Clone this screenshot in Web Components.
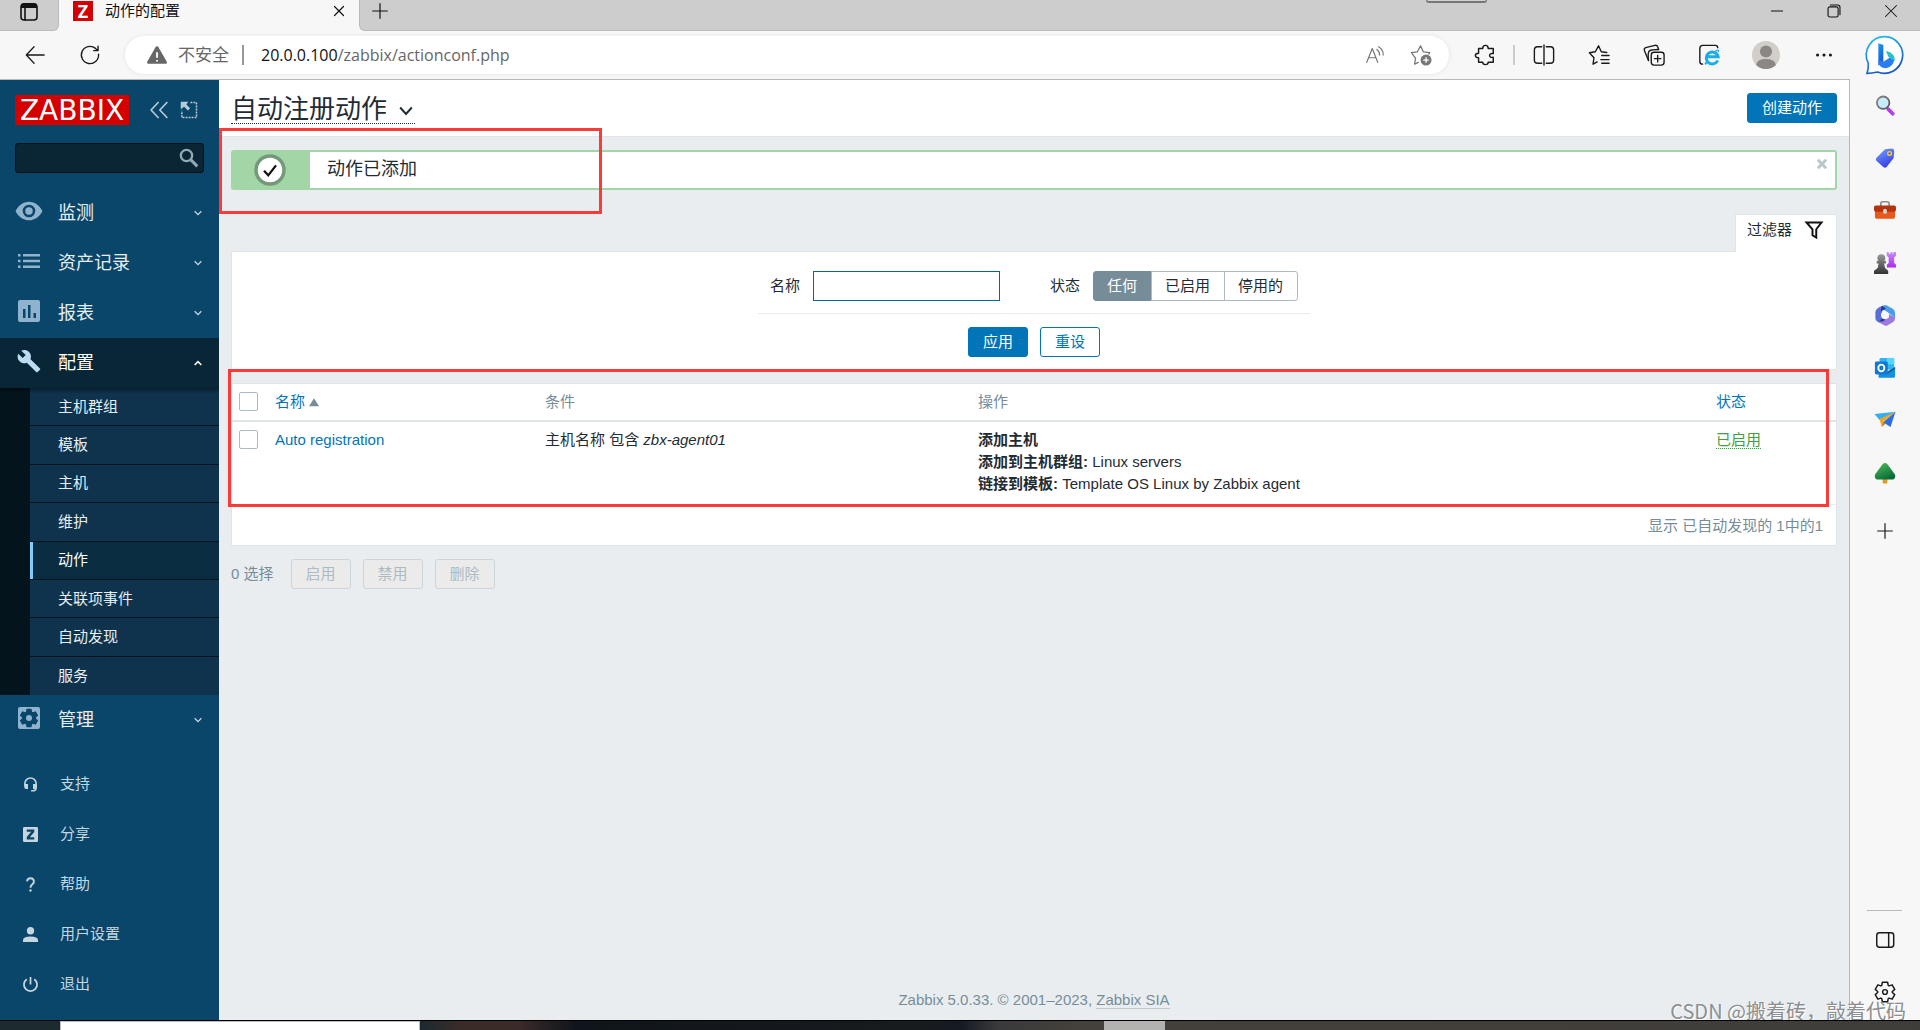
<!DOCTYPE html>
<html lang="zh-CN">
<head>
<meta charset="utf-8">
<title>动作的配置</title>
<style>
  body { margin: 0; font: 15px/22px "Liberation Sans", "Noto Sans CJK SC", sans-serif; color: #1f2c33; }
</style>
</head>
<body>
<app-window></app-window>
<script>
const base = `*{box-sizing:border-box} a{color:inherit;text-decoration:none} button,input{font:inherit;color:inherit;margin:0} button{border:0;background:none;padding:0;cursor:pointer}`;
function define(name, css, html) {
  const t = document.createElement('template');
  t.innerHTML = `<style>${base}${css}</style>${html}`;
  customElements.define(name, class extends HTMLElement {
    constructor() { super(); this.attachShadow({ mode: 'open' }).append(t.content.cloneNode(true)); }
  });
}

const gear = (r1, r2) => {
  let d = '';
  for (let i = 0; i < 6; i++) {
    const a = i * 60 - 90;
    [[-26, r2], [-15, r1], [15, r1], [26, r2]].forEach(([o, r], j) => {
      const k = (a + o) * Math.PI / 180;
      d += `${i || j ? 'L' : 'M'}${(12 + r * Math.cos(k)).toFixed(2)} ${(12 + r * Math.sin(k)).toFixed(2)}`;
    });
  }
  return d + 'Z';
};
const S = 'fill="none" stroke="currentColor" stroke-linecap="round" stroke-linejoin="round"';
const F = 'fill="currentColor"';
const icons = {
  tabs: `<g ${S} stroke-width="1.6"><rect x="4" y="4" width="16" height="16" rx="3"/><path d="M8 8v12"/></g><path ${F} d="M4 8V6q0-3 3-3h10q3 0 3 3v2z"/>`,
  close: `<path ${S} stroke-width="1.2" d="M7.500 7.500l9 9M16.500 7.500l-9 9"/>`,
  winclose: `<path ${S} stroke-width="1.100" d="M6 6l12 12M18 6L6 18"/>`,
  plus: `<path ${S} stroke-width="1.3" d="M12 4v16M4 12h16"/>`,
  min: `<path ${S} stroke-width="1.2" d="M6 12h12"/>`,
  restore: `<g ${S} stroke-width="1.2"><rect x="5.500" y="7.500" width="11" height="11" rx="2"/><path d="M8 5.500h8q2.500 0 2.500 2.500v8"/></g>`,
  back: `<path ${S} stroke-width="1.4" d="M22 12H2.500M11 3L2.500 12l8.500 9"/>`,
  reload: `<path ${S} stroke-width="1.5" d="M21.300 11A9.400 9.400 0 1 1 18 4.800l2.500 2.200M20.800 2.500V7.200H16"/>`,
  warn: `<path fill="#666" d="M12 2.500q1 0 1.600 1L22.500 19q1 2.500-1.500 2.500H3Q.5 21.500 1.500 19L10.400 3.500q.6-1 1.600-1z"/><path d="M12 9v6M12 17.500v1.500" stroke="#fff" stroke-width="2"/>`,
  read: `<g ${S} stroke="#777" stroke-width="1.300"><path d="M3 20L9 5l6 15M5 15h8M14 6q3 2 3 6M16 3q5 3 5 9"/></g>`,
  addfav: `<path ${S} stroke-width="1.400" d="M9 20l-4 2 1-6.500L1.500 9.500l6.500-1L11.500 2l3 6.500 7 1-1 1.500"/><circle cx="17.500" cy="17.500" r="6" ${F}/><path d="M17.500 14.500v6M14.500 17.500h6" stroke="#fff" stroke-width="1.400"/>`,
  ext: `<path ${S} stroke-width="1.600" d="M5 5h4.500q0-3.500 3-3.500t3 3.500H21v5.500q-4-.5-4 2t4 2V20h-5.500q0 2.500-3 2.500t-3-2.500H5v-5Q1.500 15 1.500 12.500T5 10z"/>`,
  split: `<path ${S} stroke-width="1.500" d="M9.500 3H5Q1.500 3 1.500 6.500v11Q1.500 21 5 21h4.500M14.500 3H19q3.500 0 3.500 3.500v11Q22.500 21 19 21h-4.500M12 1v22"/>`,
  fav: `<path ${S} stroke-width="1.500" d="M10 19.500l-4.500 2.500 1-7L1.500 9.500l6.500-1L11.500 2l3 6.500 6 .8M15 12.500h8M14 17h9M15 21h8"/>`,
  collect: `<g ${S} stroke-width="1.500"><rect x="9" y="9" width="14" height="14" rx="3"/><path d="M16 12.500v7M12.500 16h7M6 18L1.500 7Q1 4.500 3 4l10-2.500q2.500-.4 3 1.500L17 6"/><path d="M6 18Q5 9 7 7.500T17 6"/></g>`,
  ie: `<path ${S} stroke-width="1.500" d="M5 22Q2 22 2 19V5q0-3.500 3-3.500h14q2.500 0 2.500 2.500"/><path fill="none" stroke="#1aaee8" stroke-width="3.200" d="M21.500 18a6.500 6.500 0 1 1 .5-4H10"/><path fill="none" stroke="#1aaee8" stroke-width="1.500" d="M10 20q-3 3.500-1.500 0M19 8q4-3 3 1"/>`,
  avatar: `<circle cx="12" cy="12" r="12" fill="#d2cfca"/><circle cx="12" cy="9" r="5.200" fill="#8b8784"/><path fill="#8b8784" d="M3.500 20.500q1-5 8.500-5t8.500 5Q17 24 12 24T3.500 20.500z"/>`,
  dots: `<g ${F}><circle cx="5" cy="12" r="1.700"/><circle cx="12" cy="12" r="1.700"/><circle cx="19" cy="12" r="1.700"/></g>`,
  bing: `<defs><linearGradient id="a" x2=".4" y2="1"><stop stop-color="#20c5ee"/><stop offset="1" stop-color="#1857c9"/></linearGradient><linearGradient id="b" x2=".3" y2="1"><stop stop-color="#1a9bf0"/><stop offset="1" stop-color="#1657d8"/></linearGradient></defs><path fill="#fff" stroke="url(#a)" stroke-width="1" d="M12 1a11 11 0 1 1-4.500 21.200Q4 23 1.200 23q.9-2.500.8-6A11 11 0 0 1 12 1z"/><path fill="url(#b)" d="M8 5l3 1v10l-3 2.500z"/><path fill="#2a7df0" d="M8 15l3 1 4-2.500 2.500 1.500Q17 19 12.500 20 8 20 8 15z"/><path fill="#25c2c9" d="M12.500 9.500q5.500 1.500 5.500 6l-3-1.500-1-1z"/>`,
  lens: `<defs><linearGradient id="a" x2="1" y2="1"><stop stop-color="#8a8a8a"/><stop offset="1" stop-color="#555"/></linearGradient></defs><path d="M15.500 16.500l5 5" stroke="#b63af0" stroke-width="4" stroke-linecap="round"/><circle cx="10" cy="9.500" r="6.800" fill="#c6ebfb" stroke="url(#a)" stroke-width="2"/>`,
  tag: `<defs><linearGradient id="a" x2=".5" y2="1"><stop stop-color="#6fa8ff"/><stop offset="1" stop-color="#3d3de8"/></linearGradient></defs><path fill="url(#a)" d="M12 2.500L19 1.500q3 0 3 3l-.5 7.500-8 10q-1.500 1-3 0L2.500 15q-1-1.500 0-3z"/><circle cx="17" cy="7" r="2" fill="#4a5ad8" stroke="#ffd028" stroke-width="1.500"/>`,
  brief: `<path fill="none" stroke="#8d8a88" stroke-width="1.800" d="M7.500 8V5q0-2 2-2h5q2 0 2 2v3"/><rect x="1" y="11" width="22" height="10.500" rx="2" fill="#e65a1e"/><rect x="0" y="7" width="24" height="7" rx="2" fill="#b53410"/><rect x="10" y="11" width="4" height="5" rx="1.500" fill="#d5d2d0"/>`,
  chess: `<defs><linearGradient id="a" x2="0" y2="1"><stop stop-color="#999"/><stop offset="1" stop-color="#333"/></linearGradient><linearGradient id="b" x2="0" y2="1"><stop stop-color="#c88cff"/><stop offset="1" stop-color="#a92bf0"/></linearGradient></defs><path fill="url(#b)" d="M14 0h2v2h2V0h2v2h1V0h3v4L22 6v6l2 2v3H14v-3l2-2V6l-2-2z"/><path fill="url(#a)" d="M8 2.500a4 4 0 0 1 3 7h2v3h-2l1 5 3.500 3V24H0v-3.500l4-3 1-5H3v-3h2a4 4 0 0 1 3-7z"/>`,
  m365: `<path fill="#4a9cf0" d="M9 2l4-1 7.500 4.300Q23 7 23 10v5l-6-4.500L12 7l-5-1z"/><path fill="#5a6fd6" d="M9 2Q1.500 5 1.500 9v6Q1.500 18.500 5 20l4-3-1.500-5.500L9 8z"/><path fill="#9b7be0" d="M5 20l6.500 3.500q1.500.5 3 0L21 19.500q2.500-2 2-5L16 11v4l-6 2.500z"/><path fill="#283b8e" d="M9 2q-2 2-1 9V8l5-3zM5 20l6-1.500 1-2-3-1z"/><circle cx="12.200" cy="12.200" r="4" fill="#f7f7f7"/>`,
  outlook: `<rect x="6" y="1" width="16" height="13" rx="1.500" fill="#32b4f0"/><rect x="14" y="1" width="8" height="7" fill="#50d9ff"/><path fill="#1490df" d="M5 22.500V13l9 4 9-6v10q0 1.500-1.500 1.500z"/><path fill="#0a5ba8" d="M13 17l10-6v2l-8 5 8 4.500z"/><rect x="1" y="5" width="14" height="14" rx="1.500" fill="#0f78d4"/><ellipse cx="8" cy="12" rx="3.300" ry="3.600" fill="none" stroke="#fff" stroke-width="2"/>`,
  plane: `<path fill="#35aef2" d="M.5 5.500L23.500 3 6 12z"/><path fill="#f2a516" d="M6 11l17.500-8L10 14l-1.500 5.500z"/><path fill="#2c6be0" d="M23.500 3L18 19.500 10 14.500z"/><path fill="#c77a08" d="M8.500 19.500L10 14l2.500 2z"/>`,
  tree: `<defs><linearGradient id="a" x2=".6" y2="1"><stop stop-color="#4fc35a"/><stop offset="1" stop-color="#0b6b3a"/></linearGradient></defs><rect x="9.500" y="17" width="5" height="6.500" rx="1" fill="#e8971e"/><path fill="url(#a)" d="M12 1q2 0 3.500 2.500L22.500 13q2 4-1.500 6H3Q-.5 17 1.500 13l7-9.500Q10 1 12 1z"/>`,
  panel: `<g ${S} stroke-width="1.600"><rect x="3" y="4" width="18.500" height="16" rx="3"/><path d="M16 4v16"/></g>`,
  setting: `<path ${S} stroke-width="1.600" d="${gear(11, 8)}"/><circle cx="12" cy="12" r="2.600" ${S} stroke-width="1.600"/>`,
  collapse: `<path ${S} stroke-linecap="butt" stroke-width="2" d="M11 3L2.500 12l8.500 9M21.500 3L13 12l8.500 9"/>`,
  kiosk: `<path ${F} d="M1 1h10L8.500 4.500l5 5-3 3-5-5L1 11z"/><path fill="none" stroke="currentColor" stroke-width="2" stroke-dasharray="2.500 1.500" d="M14 2h8v20H2.500V13"/>`,
  search: `<g fill="none" stroke="currentColor"><circle cx="9" cy="9" r="6.800" stroke-width="2.800"/><path stroke-width="3.600" d="M14 14l8 8"/></g>`,
  eye: `<path ${F} fill-rule="evenodd" d="M12 4c5 0 9.500 3.500 11.500 8-2 4.500-6.500 8-11.500 8S2.500 16.500.5 12C2.500 7.500 7 4 12 4zm0 2.600a5.400 5.400 0 1 0 0 10.800 5.400 5.400 0 0 0 0-10.800zm0 2.200a3.200 3.200 0 1 1 0 6.400 3.200 3.200 0 0 1 0-6.400z"/>`,
  list: `<g ${F}><path d="M1 5h2.500v2.500H1zM1 10.700h2.500v2.500H1zM1 16.500h2.500V19H1zM6 5h17v2.500H6zM6 10.700h17v2.500H6zM6 16.500h17V19H6z"/></g>`,
  chart: `<path ${F} fill-rule="evenodd" d="M3 1h18q2 0 2 2v18q0 2-2 2H3q-2 0-2-2V3q0-2 2-2zm3 9v9h2.500v-9zm5-4v13h2.500V6zm5.500 8v5H19v-5z"/>`,
  wrench: `<path ${F} d="M23 19.500l-9.500-9.300c1-2.500.4-5.300-1.500-7.200C9.900 1 6.800.6 4.300 1.700L8.700 6 5.700 9 1.200 4.700C0 7.200.5 10.300 2.600 12.300c2 2 4.800 2.500 7.200 1.500l9.400 9.300q.7.600 1.400 0l2.400-2.300q.6-.7 0-1.300z"/>`,
  admin: `<path ${F} fill-rule="evenodd" d="M3 1h18q2 0 2 2v18q0 2-2 2H3q-2 0-2-2V3q0-2 2-2z ${gear(9.500, 7)} M12 9a3 3 0 1 0 0 6 3 3 0 0 0 0-6z"/>`,
  support: `<path fill="none" stroke="currentColor" stroke-width="2.600" d="M3 14v-3.500a9 9 0 0 1 18 0V17q0 5-6 5h-2"/><path ${F} d="M2 11h6v8H5q-3 0-3-3zM16 11h6v5q0 3-3 3h-3z"/>`,
  share: `<path ${F} fill-rule="evenodd" d="M2 0h20q2 0 2 2v20q0 2-2 2H2q-2 0-2-2V2q0-2 2-2zm4 4v3.500h7L6 16v4h12v-3.500h-7L18 8V4z"/>`,
  help: `<path fill="none" stroke="currentColor" stroke-width="3" d="M6.500 7Q7 2 12 2T17.500 7Q17.500 9.500 15 11.500 12 13.500 12 17"/><circle cx="12" cy="21.500" r="1.900" ${F}/>`,
  user: `<g ${F}><ellipse cx="12" cy="6" rx="5.800" ry="6"/><path d="M0 24v-3q0-6 12-6t12 6v3z"/></g>`,
  power: `<path fill="none" stroke="currentColor" stroke-width="2.800" d="M12 0v12M6 3.500a10.500 10.500 0 1 0 12 0"/>`,
  down: `<path fill="none" stroke="currentColor" stroke-width="4" d="M2 7l10 10L22 7"/>`,
  up: `<path fill="none" stroke="currentColor" stroke-width="4.500" d="M2 18L12 8l10 10"/>`,
  chev: `<path fill="none" stroke="currentColor" stroke-width="3.400" d="M2 6l10 11L22 6"/>`,
  check: `<circle cx="12" cy="12" r="10.500" fill="#fff" stroke="#75987a" stroke-width="2.600"/><path fill="none" stroke="#111" stroke-width="1.700" d="M7.500 12.500l3.200 3.500L16.500 8.500"/>`,
  cross: `<path stroke="currentColor" stroke-width="7" d="M2 2l20 20M22 2L2 22"/>`,
  funnel: `<path fill="none" stroke="currentColor" stroke-width="2.600" d="M2 2h20l-7 9v11l-5-3v-8z"/>`,
  sort: `<path ${F} d="M12 3l12 19H0z"/>`
};
customElements.define('ui-icon', class extends HTMLElement {
  constructor() { super(); this.attachShadow({ mode: 'open' }); }
  connectedCallback() {
    const s = this.getAttribute('size') || 24;
    this.shadowRoot.innerHTML = `<style>:host{display:inline-flex;flex:none;width:${s}px;height:${s}px}svg{width:100%;height:100%;overflow:visible}</style><svg viewBox="0 0 24 24" aria-hidden="true">${icons[this.getAttribute('name')]}</svg>`;
  }
});

define('edge-tabstrip', `
  :host{display:flex;height:31px;background:#f7f7f7;color:#111}
  .menu{width:59px;background:#cdcdcd;border-right:1px solid #bbb;border-bottom:1px solid #bbb;border-radius:0 0 6px 0;display:flex;justify-content:center;align-items:flex-start}
  .tab{width:300px;padding:0 8px 0 14px;display:flex;align-items:center;height:22px;gap:12px}
  .fav{width:20px;height:20px;background:#d40000;color:#fff;font:bold 18px/20px "Open Sans",sans-serif;text-align:center}
  .tab span{flex:1}
  button{display:flex}
  .rest{flex:1;background:#cdcdcd;border-left:1px solid #bbb;border-bottom:1px solid #bbb;border-radius:0 0 0 6px;display:flex;padding-left:9px;padding-right:1px;align-items:flex-start}
  .grip{width:61px;height:3px;margin-left:auto;margin-right:261px;background:#cfd4cf;border:1px solid #777;border-bottom-width:2px;border-top:0;border-radius:0 0 4px 4px}
  .win{width:57px;justify-content:center}`,
 `<button class="menu" aria-label="标签页操作"><ui-icon name="tabs" size="24"></ui-icon></button>
  <div class="tab"><div class="fav">Z</div><span>动作的配置</span><button aria-label="关闭标签页"><ui-icon name="close" size="24"></ui-icon></button></div>
  <div class="rest"><button aria-label="新建标签页"><ui-icon name="plus" size="22"></ui-icon></button><div class="grip"></div>
  <button class="win" aria-label="最小化"><ui-icon name="min" size="22"></ui-icon></button><button class="win" aria-label="还原"><ui-icon name="restore" size="22"></ui-icon></button><button class="win" aria-label="关闭"><ui-icon name="winclose" size="22"></ui-icon></button></div>`);

define('edge-toolbar', `
  :host{display:flex;align-items:center;height:48px;padding:0 5px 0 24px;background:#f7f7f7;color:#1a1a1a}
  button{display:flex;align-items:center;justify-content:center;width:55px}
  .nav{width:22px;margin-right:33px}
  .pill{flex:1;height:38px;border-radius:19px;background:#fff;box-shadow:0 0 4px #e4e4e4;display:flex;align-items:center;padding:0 16px 0 21px;margin:0 8px 0 -9px;color:#666;font:17px/24px "Open Sans","Noto Sans CJK SC",sans-serif}
  .pill span{margin:0 13px 0 10px}
  .pill i{width:2px;height:20px;background:#999;margin-right:17px}
  .url{flex:1;font-size:16px}.url b{font-weight:400;color:#111}
  .pill button{width:46px;color:#777}
  .pill button:last-child{width:24px;margin-left:11px}
  .sep{width:2px;height:20px;background:#ccc;margin:0 1px}
  .av{width:60px} .chat{width:64px;justify-content:flex-end;padding-right:10px}`,
 `<button class="nav" aria-label="返回"><ui-icon name="back" size="22"></ui-icon></button><button class="nav" aria-label="刷新"><ui-icon name="reload" size="22"></ui-icon></button>
  <div class="pill"><ui-icon name="warn" size="22"></ui-icon><span>不安全</span><i></i><div class="url"><b>20.0.0.100</b>/zabbix/actionconf.php</div>
  <button aria-label="大声朗读"><ui-icon name="read" size="22"></ui-icon></button><button aria-label="添加到收藏夹"><ui-icon name="addfav" size="22"></ui-icon></button></div>
  <button aria-label="扩展"><ui-icon name="ext" size="22"></ui-icon></button><div class="sep"></div>
  <button aria-label="分屏"><ui-icon name="split" size="22"></ui-icon></button><button aria-label="收藏夹"><ui-icon name="fav" size="22"></ui-icon></button>
  <button aria-label="集锦"><ui-icon name="collect" size="22"></ui-icon></button><button aria-label="IE 模式"><ui-icon name="ie" size="22"></ui-icon></button>
  <button class="av" aria-label="个人资料"><ui-icon name="avatar" size="28"></ui-icon></button><button aria-label="更多"><ui-icon name="dots" size="22"></ui-icon></button>
  <button class="chat" aria-label="必应"><ui-icon name="bing" size="40"></ui-icon></button>`);

define('edge-sidebar', `
  :host{display:flex;flex-direction:column;width:71px;background:#f7f7f7;border-left:1px solid #b8b8b8;align-items:center;color:#1a1a1a;padding:0 1px 2px 0}
  .apps{display:grid;grid-template-rows:repeat(8,1fr);height:420px}
  button{display:flex;align-items:center;justify-content:center;width:53px;height:52px}
  .plus{margin-top:6px}
  hr{width:35px;border:0;border-top:1px solid #b8b8b8;margin:auto 0 3px}`,
 `<div class="apps">${[['lens','搜索'],['tag','购物'],['brief','工具'],['chess','游戏'],['m365','Microsoft 365'],['outlook','Outlook'],['plane','Drop'],['tree','树']].map(([n,l]) => `<button aria-label="${l}"><ui-icon name="${n}" size="22"></ui-icon></button>`).join('')}</div>
  <button class="plus" aria-label="自定义"><ui-icon name="plus" size="22"></ui-icon></button><hr>
  <button aria-label="隐藏边栏"><ui-icon name="panel" size="22"></ui-icon></button><button aria-label="设置"><ui-icon name="setting" size="22"></ui-icon></button>`);

define('zbx-menu-item', `
  :host{display:flex;align-items:center;height:50px;padding:0 17px 0 15px;color:#e6eef3;font-size:18px}
  a{display:flex;flex:1;align-items:center}
  .i{display:flex;width:28px;height:31px;justify-content:center}
  .t{flex:1;margin-left:15px}
  :host([open]){background:#092637;color:#fff}`, `<a href="#"><span class="i"><slot name="icon"></slot></span><span class="t"><slot></slot></span><slot name="chev"></slot></a>`);
define('zbx-sub-item', `
  :host{display:flex;border-bottom:1px solid #04141d;background:#0f334d;color:#e6eef3}
  :host(:last-child){border-bottom:0}
  a{display:flex;flex:1;align-items:center;padding-left:28px}
  :host([selected]){background:#0a2d41;color:#fff}
  :host([selected]) a{border-left:3px solid #80ccff;padding-left:25px}`, `<a href="#"><slot></slot></a>`);
define('zbx-foot-item', `
  :host{display:flex;height:50px;padding:0 23px;color:#c6d6e0}
  a{display:flex;flex:1;align-items:center}
  span{margin-left:22px}`, `<a href="#"><slot name="icon"></slot><span><slot></slot></span></a>`);

const item = (icon, text, open) => `<zbx-menu-item ${open ? 'open' : ''}><ui-icon class="mi" slot="icon" name="${icon}" size="${icon === 'eye' ? 28 : 24}"></ui-icon>${text}<ui-icon slot="chev" name="${open ? 'up' : 'down'}" size="8"></ui-icon></zbx-menu-item>`;
define('zbx-sidebar', `
  :host{display:block;width:219px;background:#0a466a}
  .top{display:flex;align-items:center;height:30px;margin:15px 15px 18px;color:#b5cbd8}
  .logo{flex:none;width:114px;height:30px;background:#d40000;color:#fff;font:28px/31px "DejaVu Sans",sans-serif;text-align:center;margin-right:20px}
  .top button{display:flex;margin-right:11px}
  .top button:last-child{margin:0}
  .search{display:flex;align-items:center;height:30px;margin:0 15px 15px;border:1px solid #041018;border-radius:3px;background:#0a2635;color:#8fa9ba;padding-right:4px}
  .search input{flex:1;min-width:0;background:none;border:0;outline:0;padding:0 8px;height:28px}
  .search button{display:flex}
  .mi{color:#8fb3cd} zbx-menu-item ui-icon[slot=chev]{color:#c5d5df}
  .mi{margin-top:1px} .mi[name=eye]{margin-top:-1px}
  zbx-menu-item[open] .mi{color:#bcdcf2} zbx-menu-item[open] ui-icon[slot=chev]{color:#fff}
  .sub{display:grid;grid-template-rows:repeat(8,1fr);height:307px;padding-left:30px;background:#04141d;position:relative}
  .sub::before{content:"";position:absolute;inset:0 0 auto;height:6px;background:linear-gradient(#0006,#0000);z-index:1}
  .foot{margin-top:14px}`,
 `<div class="top"><div class="logo">ZABBIX</div><button aria-label="折叠"><ui-icon name="collapse" size="20"></ui-icon></button><button aria-label="隐藏"><ui-icon name="kiosk" size="18"></ui-icon></button></div>
  <div class="search"><input aria-label="搜索"><button aria-label="搜索"><ui-icon name="search" size="20"></ui-icon></button></div>
  <nav>${item('eye','监测')}${item('list','资产记录')}${item('chart','报表')}${item('wrench','配置',1)}
  <div class="sub">${['主机群组','模板','主机','维护','动作','关联项事件','自动发现','服务'].map(t => `<zbx-sub-item ${t === '动作' ? 'selected' : ''}>${t}</zbx-sub-item>`).join('')}</div>
  ${item('admin','管理')}</nav>
  <div class="foot">${[['support','支持'],['share','分享'],['help','帮助'],['user','用户设置'],['power','退出']].map(([i,t]) => `<zbx-foot-item><ui-icon slot="icon" name="${i}" size="15"></ui-icon>${t}</zbx-foot-item>`).join('')}</div>`);

define('zbx-button', `
  :host{display:inline-flex}
  button{height:30px;padding:0 14px;line-height:28px;border:1px solid #0275b8;border-radius:3px;background:#0275b8;color:#fff}
  :host([alt]) button{background:#fff;color:#0275b8}
  button:disabled{background:#ebebeb;color:#acbbc2;border-color:#ccd5d9}`, `<button><slot></slot></button>`);
customElements.define('zbx-disabled-button', class extends customElements.get('zbx-button') {
  constructor() { super(); this.shadowRoot.querySelector('button').disabled = true; }
});

define('zbx-message', `
  :host{display:flex;height:40px;border:2px solid #a3d6a6;border-radius:3px;background:#fff;font-size:18px}
  .i{width:77px;background:#a3d6a6;display:flex;align-items:center;justify-content:center;padding-right:3px}
  p{flex:1;margin:0;padding:0 17px;line-height:34px}
  button{display:flex;color:#b8c6cd;margin:7px 8px 0 0;height:10px}`,
 `<div class="i"><ui-icon name="check" size="32"></ui-icon></div><p><slot></slot></p><button aria-label="关闭"><ui-icon name="cross" size="10"></ui-icon></button>`);

define('zbx-filter', `
  :host{display:block}
  .tab{display:flex;align-items:center;gap:13px;width:102px;height:38px;margin:0 0 -1px auto;padding:0 12px 7px 11px;border:1px solid #dfe4e7;border-bottom:0;background:#fff;position:relative;white-space:nowrap}
  .tab ui-icon{color:#111}
  form{border:1px solid #dfe4e7;background:#fff;padding:19px 0 12px;display:flex;flex-direction:column;align-items:center}
  .row{display:flex;align-items:center;width:552px;padding:0 9px 12px 12px;border-bottom:1px solid #ebebeb;white-space:nowrap}
  .name{width:187px;height:30px;border:1px solid #02669f;padding:0 5px;margin:0 50px 0 13px;outline:0}
  fieldset{display:flex;border:0;margin:0 0 0 13px;padding:0}
  fieldset label{height:30px;line-height:28px;padding:0 14px 0 13px;border:1px solid #acbbc2;margin-left:-1px;position:relative}
  fieldset label:first-child{margin-left:0;border-radius:3px 0 0 3px}
  fieldset label:last-child{border-radius:0 3px 3px 0}
  fieldset label:has(:checked){background:#768d99;border-color:#768d99;color:#fff}
  fieldset input{position:absolute;opacity:0;inset:0}
  .act{display:flex;gap:12px;margin-top:13px}`,
 `<button class="tab">过滤器<ui-icon name="funnel" size="18"></ui-icon></button>
  <form onsubmit="return false"><div class="row"><label for="n">名称</label><input class="name" id="n"><span id="s">状态</span>
  <fieldset aria-labelledby="s"><label><input type="radio" name="st" checked>任何</label><label><input type="radio" name="st">已启用</label><label><input type="radio" name="st">停用的</label></fieldset></div>
  <div class="act"><zbx-button>应用</zbx-button><zbx-button alt>重设</zbx-button></div></form>`);

define('zbx-table', `
  :host{display:block;border:1px solid #dfe4e7;background:#fff}
  table{width:100%;table-layout:fixed;border-collapse:separate;border-spacing:0}
  th,td{padding:7px 5px;text-align:left;vertical-align:top;font-weight:400}
  th{height:38px;border-bottom:2px solid #dfe4e7;color:#768d99}
  tbody td{padding-bottom:9px;border-bottom:1px solid #ebeef0}
  th:first-child,tbody td:first-child{padding:8px 7px}
  a{color:#0275b8}
  th ui-icon{color:#768d99;margin-left:4px}
  input{appearance:none;width:19px;height:19px;border:1px solid #acbbc2;border-radius:2px;background:#fff;display:block}
  .on{color:#429e47;border-bottom:1px dotted #429e47}
  tfoot td{text-align:right;color:#768d99;padding:10px 13px 8px}`,
 `<table><colgroup><col style="width:38px"><col style="width:270px"><col style="width:27%"><col style="width:46%"><col></colgroup>
  <thead><tr><th><input type="checkbox" aria-label="全选"></th><th><a href="#">名称<ui-icon name="sort" size="10"></ui-icon></a></th><th>条件</th><th>操作</th><th><a href="#">状态</a></th></tr></thead>
  <tbody><tr><td><input type="checkbox" aria-label="Auto registration"></td><td><a href="#">Auto registration</a></td><td>主机名称 包含 <em>zbx-agent01</em></td>
  <td><b>添加主机</b><br><b>添加到主机群组:</b> Linux servers<br><b>链接到模板:</b> Template OS Linux by Zabbix agent</td><td><a class="on" href="#">已启用</a></td></tr></tbody>
  <tfoot><tr><td colspan="5">显示 已自动发现的 1中的1</td></tr></tfoot></table>`);

define('mark-box', `:host{position:absolute;box-sizing:border-box;border:3px solid #fc3a3a;pointer-events:none;z-index:5}`, ``);

define('zbx-main', `
  :host{display:flex;flex-direction:column;flex:1;background:#e9edf0;position:relative;min-width:0}
  header{display:flex;align-items:center;justify-content:space-between;height:57px;padding:0 12px;background:#fff;border-bottom:1px solid #dfe4e7}
  h1{margin:0;font-weight:400}
  h1 button{display:flex;align-items:center;gap:12px;font-size:26px;line-height:30px;height:32px;border-bottom:1px dotted #1f2c33;padding:2px 2px 0 0}
  h1 ui-icon{margin-top:5px}
  .body{padding:13px 12px 0}
  zbx-filter{margin:24px 0 13px}
  .sel{display:flex;align-items:center;gap:12px;margin-top:13px;color:#768d99}
  .sel span{margin-right:5px}
  footer{margin-top:auto;text-align:center;color:#768d99;padding-bottom:9px}
  footer a{border-bottom:1px solid #c0c9ce}
  .m1{left:0;top:48px;width:383px;height:86px}
  .m2{left:9px;right:20px;top:289px;height:138px}`,
 `<header><h1><button>自动注册动作<ui-icon name="chev" size="14"></ui-icon></button></h1><zbx-button>创建动作</zbx-button></header>
  <div class="body"><zbx-message>动作已添加</zbx-message><zbx-filter></zbx-filter><zbx-table></zbx-table>
  <div class="sel"><span>0 选择</span><zbx-disabled-button>启用</zbx-disabled-button><zbx-disabled-button>禁用</zbx-disabled-button><zbx-disabled-button>删除</zbx-disabled-button></div></div>
  <footer>Zabbix 5.0.33. © 2001–2023, <a href="#">Zabbix SIA</a></footer>
  <mark-box class="m1"></mark-box><mark-box class="m2"></mark-box>`);

define('os-taskbar', `
  :host{display:flex;height:10px;border-top:1px solid #000;box-sizing:border-box;background:linear-gradient(90deg,#1d2a30 22%,#3a2b29 24%,#3a2b29 27%,#10151b 30%,#171b1e 48%,#141a22 50%,#3a3a3c 52%,#44403a 56%,#3f3d3a 100%)}
  .s{width:360px;margin-left:60px;background:#fff;border:1px solid #bbb;border-bottom:0}
  .a{width:61px;margin-left:684px;background:#b1b1b0}`, `<div class="s"></div><div class="a"></div>`);

define('app-window', `
  :host{display:flex;flex-direction:column;min-height:100vh;position:relative;overflow:hidden}
  .mid{display:flex;flex:1}
  .page{display:flex;flex:1;border-top:1px solid #b8b8b8;min-width:0}
  .wm{position:absolute;right:14px;bottom:4px;font-family:"Noto Sans CJK SC",sans-serif;font-size:20px;line-height:30px;color:#8b8f91;text-shadow:1px 1px 0 #fff;z-index:2;white-space:nowrap}
  os-taskbar{position:relative;z-index:3}`,
 `<edge-tabstrip></edge-tabstrip><edge-toolbar></edge-toolbar>
  <div class="mid"><div class="page"><zbx-sidebar></zbx-sidebar><zbx-main></zbx-main></div><edge-sidebar></edge-sidebar></div>
  <os-taskbar></os-taskbar><div class="wm">CSDN @搬着砖，敲着代码</div>`);
</script>
</body>
</html>
